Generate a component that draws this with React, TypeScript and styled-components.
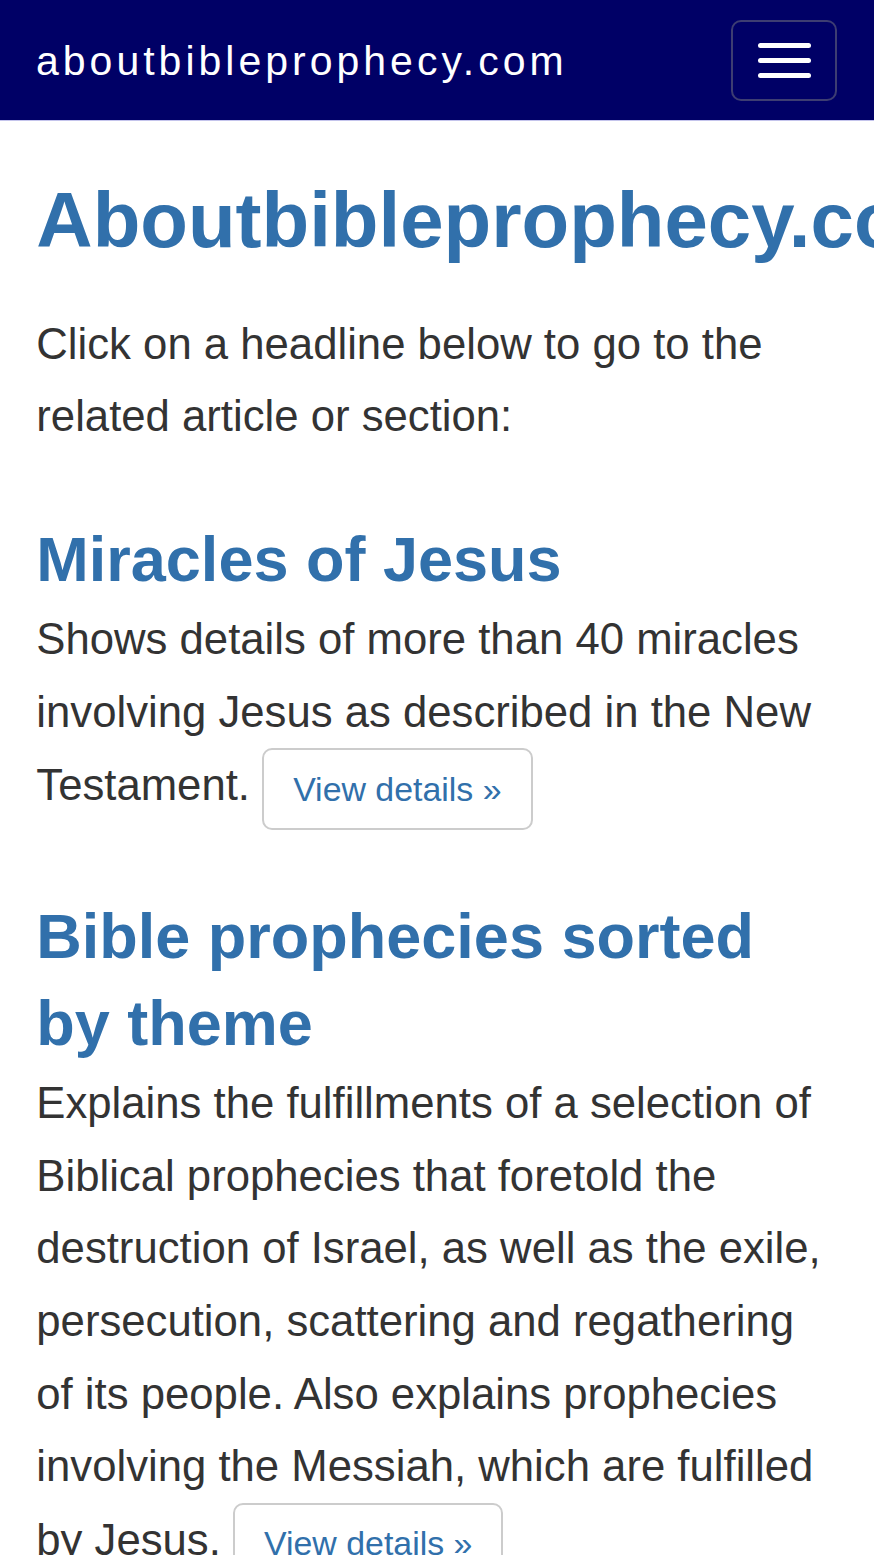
import React from "react";
import styled, { createGlobalStyle } from "styled-components";

const GlobalStyle = createGlobalStyle`
  html, body {
    margin: 0;
    padding: 0;
    background: #ffffff;
    overflow-x: hidden;
  }
  body {
    font-family: "Liberation Sans", Arial, Helvetica, sans-serif;
    color: #333333;
  }
  * { box-sizing: border-box; }
`;

const Navbar = styled.header`
  background: #000066;
  border-bottom: 1px solid #c4c4ec;
`;

const NavInner = styled.div`
  height: 120px;
  display: flex;
  align-items: center;
  justify-content: space-between;
  padding: 0 37px 0 36px;
`;

const Brand = styled.a`
  color: #ffffff;
  text-decoration: none;
  font-size: 41px;
  line-height: 48.4px;
  letter-spacing: 4px;
  margin-top: 2px;
`;

const Toggle = styled.button`
  width: 106px;
  height: 81px;
  margin-top: 1px;
  background: transparent;
  border: 2px solid #3d3d72;
  border-radius: 10px;
  display: flex;
  flex-direction: column;
  align-items: center;
  justify-content: center;
  gap: 10px;
  padding: 0;
  cursor: pointer;
`;

const IconBar = styled.span`
  display: block;
  width: 53px;
  height: 5px;
  border-radius: 2.5px;
  background: #ffffff;
`;

const Main = styled.main`
  padding: 0 36.3px;
`;

const Title = styled.h1`
  margin: 57px 0 0;
  font-size: 78px;
  line-height: 1.1;
  font-weight: 700;
  color: #3170ab;
  white-space: nowrap;
`;

const Text = styled.p<{ $gap?: number }>`
  margin: ${(p) => p.$gap ?? 0}px 0 0;
  font-size: 43.7px;
  line-height: 72.6px;
  color: #333333;
`;

const Section = styled.section`
  margin-top: 63px;
`;

const Heading = styled.h2`
  margin: 0;
  font-size: 63px;
  line-height: 87.3px;
  font-weight: 700;
  color: #3170ab;
`;

const DetailsButton = styled.a`
  display: inline-block;
  vertical-align: middle;
  padding: 14.5px 29px;
  font-size: 33.88px;
  line-height: 48.4px;
  color: #3170ab;
  background: #ffffff;
  border: 2px solid #cccccc;
  border-radius: 10px;
  text-decoration: none;
  white-space: nowrap;
`;

const sections = [
  {
    title: "Miracles of Jesus",
    text: "Shows details of more than 40 miracles involving Jesus as described in the New Testament.",
  },
  {
    title: "Bible prophecies sorted by theme",
    text: "Explains the fulfillments of a selection of Biblical prophecies that foretold the destruction of Israel, as well as the exile, persecution, scattering and regathering of its people. Also explains prophecies involving the Messiah, which are fulfilled by Jesus.",
  },
];

export default function App() {
  return (
    <>
      <GlobalStyle />
      <Navbar>
        <NavInner>
          <Brand href="#">aboutbibleprophecy.com</Brand>
          <Toggle aria-label="Toggle navigation">
            <IconBar />
            <IconBar />
            <IconBar />
          </Toggle>
        </NavInner>
      </Navbar>
      <Main>
        <Title>Aboutbibleprophecy.com</Title>
        <Text $gap={43.8}>
          Click on a headline below to go to the related article or section:
        </Text>
        {sections.map((s) => (
          <Section key={s.title}>
            <Heading>{s.title}</Heading>
            <Text>
              {s.text} <DetailsButton href="#">View details »</DetailsButton>
            </Text>
          </Section>
        ))}
      </Main>
    </>
  );
}
